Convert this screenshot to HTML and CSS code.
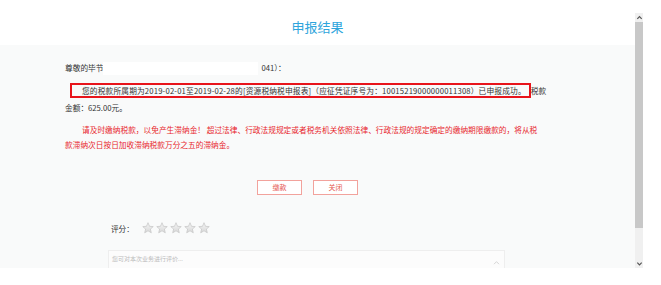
FILE: index.html
```html
<!DOCTYPE html>
<html lang="zh-CN">
<head>
<meta charset="UTF-8">
<meta name="viewport" content="width=device-width,initial-scale=1">
<title>申报结果</title>
<link rel="stylesheet" href="styles.css">
</head>
<body>
<div class="frame">
<div class="main">
<div class="title">申报结果</div>
<div class="panel">
<div class="content">
<p class="greet">尊敬的毕节<span class="blank"></span>041）：</p>
<p class="msg"><span class="mark">您的税款所属期为2019-02-01至2019-02-28的[资源税纳税申报表]（应征凭证序号为：10015219000000011308）已申报成功。</span>税款<br>金额：625.00元。</p>
<p class="warn">请及时缴纳税款，以免产生滞纳金！ 超过法律、行政法规规定或者税务机关依照法律、行政法规的规定确定的缴纳期限缴款的，将从税<br>款滞纳次日按日加收滞纳税款万分之五的滞纳金。</p>
<div class="btns">
<button>缴款</button>
<button>关闭</button>
</div>
</div>
<div class="rate">
<span class="label">评分：</span>
<div class="stars">
<svg viewBox="0 0 24 24"><use href="#star"/></svg>
<svg viewBox="0 0 24 24"><use href="#star"/></svg>
<svg viewBox="0 0 24 24"><use href="#star"/></svg>
<svg viewBox="0 0 24 24"><use href="#star"/></svg>
<svg viewBox="0 0 24 24"><use href="#star"/></svg>
</div>
</div>
<div class="comment">
<span class="ph">您可对本次业务进行评价...</span>
<svg class="tiny" viewBox="0 0 8 6"><path d="M1 5 4 2 7 5" fill="none" stroke="#ccc" stroke-width="1"/></svg>
</div>
</div>
</div>
<div class="bar">
<div class="arrow"><svg viewBox="0 0 8 8"><path d="M1.5 5.5 4 3 6.5 5.5" fill="none" stroke="#555" stroke-width="1.4"/></svg></div>
<div class="thumb"></div>
<div class="track"></div>
<div class="arrow"><svg viewBox="0 0 8 8"><path d="M1.5 3 4 5.5 6.5 3" fill="none" stroke="#555" stroke-width="1.4"/></svg></div>
</div>
</div>

<svg width="0" height="0" class="defs">
<defs>
<linearGradient id="sg" x1="0" y1="0" x2="0" y2="1">
<stop offset="0" stop-color="#f7f7f7"/>
<stop offset="1" stop-color="#d6d6d6"/>
</linearGradient>
<polygon id="star" points="12,1.5 15,8.6 22.5,9.2 16.8,14.1 18.6,21.6 12,17.6 5.4,21.6 7.2,14.1 1.5,9.2 9,8.6" fill="url(#sg)" stroke="#c4c4c4" stroke-width="1.4" stroke-linejoin="round"/>
</defs>
</svg>
</body>
</html>
```

FILE: styles.css
```css
body{margin:0;background:#fff;font-family:"Noto Sans CJK SC","Microsoft YaHei",sans-serif;color:#333}
.frame{display:flex;margin-top:13px;width:643px;height:255px}
.main{flex:1;display:flex;flex-direction:column;min-width:0}
.title{height:32px;line-height:28px;text-align:center;font-size:13px;color:#2ea5dc}
.panel{flex:1;background:#f9fafa;overflow:hidden}
.content{width:485px;margin-left:65px;padding-top:14px;font-size:7.7px}
.content p{margin:0;white-space:nowrap}
.greet{line-height:17px}
.blank{display:inline-block;width:155px;height:13px;background:#fff;vertical-align:middle;margin:0 3px 0 0}
.msg{line-height:17px;margin-top:6px !important;text-indent:5px}
.mark{border:2px solid #e8141b;padding:0 3px 0 10px;letter-spacing:.17px}
.warn{line-height:15px;margin-top:6px !important;text-indent:17px;color:#e8262d}
.btns{display:flex;justify-content:center;gap:11px;margin-top:28px}
.btns button{width:45px;height:15px;padding:0;background:#fff;border:1px solid #f2a29c;color:#e5574f;font-family:inherit;font-size:7px;line-height:13px}
.rate{display:flex;align-items:center;gap:8px;margin:26px 0 0 111px;height:14px}
.label{font-size:7.6px;color:#333}
.stars{display:flex;gap:2px}
.stars svg{width:12px;height:12px;display:block}
.comment{display:flex;justify-content:space-between;align-items:flex-start;width:397px;height:40px;margin:15px 0 0 108px;border:1px solid #eee;background:#fcfcfc;padding:3px 4px 0 3px;box-sizing:border-box}
.ph{font-size:6px;color:#bbb;line-height:9px}
.tiny{width:7px;height:5px;margin-top:6px}
.bar{width:8px;display:flex;flex-direction:column;background:#f0f0f0}
.arrow{height:9px;display:flex;align-items:center;justify-content:center}
.arrow svg{width:7px;height:7px}
.thumb{height:206px;background:#c8c8c8}
.track{flex:1}
.defs{position:absolute}
```
